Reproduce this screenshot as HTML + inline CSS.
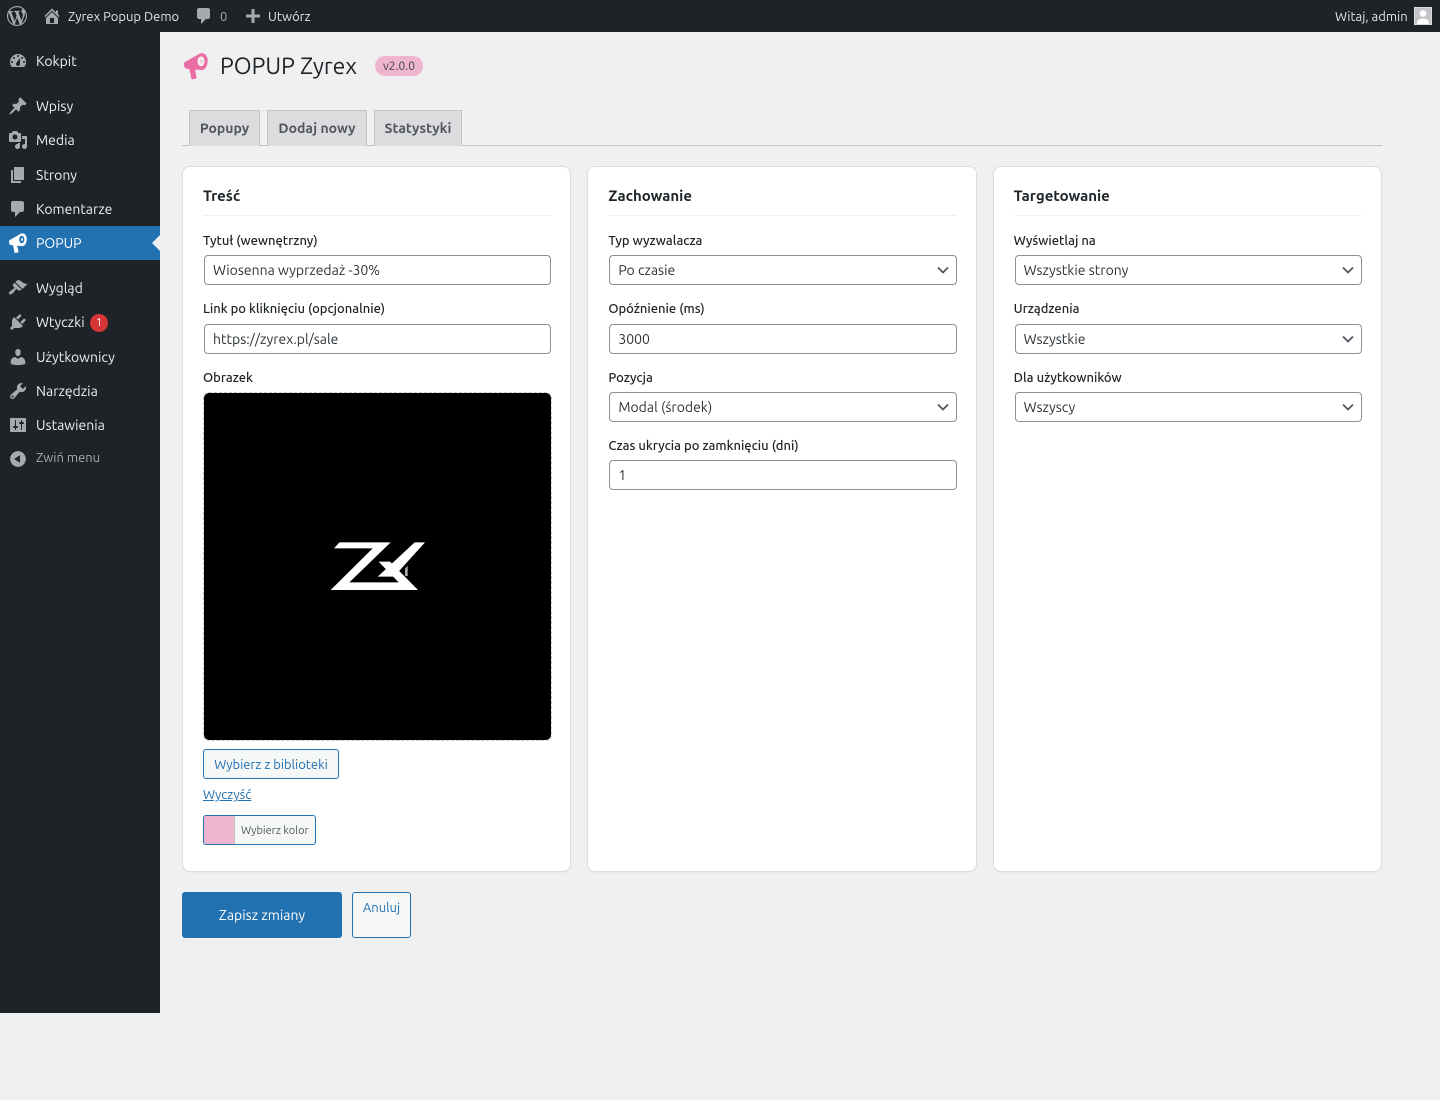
<!DOCTYPE html>
<html lang="pl"><head><meta charset="utf-8"><title>POPUP Zyrex</title>
<style>
*{box-sizing:border-box}
html{background:#f0f0f1}
html,body{margin:0;padding:0}
body{width:1440px;height:1100px;background:#f0f0f1;position:relative;overflow:hidden;font-family:Ubuntu,"Liberation Sans",sans-serif;font-size:13px;color:#3c434a}
.a{position:absolute;white-space:nowrap}
svg{position:absolute;display:block}
#bar{left:0;top:0;width:1440px;height:32px;background:#1d2327}
#menu{left:0;top:32px;width:160px;height:981px;background:#1d2327}
.bt{position:absolute;font-size:13px;line-height:32px;top:1px;color:#e2e3e4;white-space:nowrap}
.mi{position:absolute;left:36px;font-size:14px;line-height:20px;color:#f0f0f1;white-space:nowrap}
.ic{fill:#a7aaad}
.tab{position:absolute;top:110px;height:36px;background:#dcdcde;border:1px solid #c3c4c7;border-bottom:0;font-size:14px;font-weight:700;color:#50575e;line-height:35px;text-align:center;white-space:nowrap}
.card{position:absolute;top:166px;height:706px;background:#fff;border:1px solid #dcdcde;border-radius:8px;box-shadow:0 1px 2px rgba(0,0,0,.04)}
.h{position:absolute;font-size:15px;font-weight:700;color:#1d2327;line-height:20px;top:186px;white-space:nowrap}
.ln{position:absolute;top:215px;height:1px;background:#f0f0f1}
.l{position:absolute;font-size:13px;font-weight:500;line-height:18px;color:#1d2327;white-space:nowrap}
.f{position:absolute;height:30px;background:#fff;border:1px solid #8c8f94;border-radius:4px;font-size:14px;line-height:28px;padding-left:8px;color:#2c3338;white-space:nowrap}
.f svg{right:7px;top:8px}
</style></head><body>
<div class="a" id="bar"></div>
<div class="a" id="menu"></div>

<svg style="left:7px;top:6px" width="20" height="20" viewBox="0 0 20 20" class="ic"><path d="M20 10c0-5.51-4.49-10-10-10C4.48 0 0 4.49 0 10c0 5.52 4.48 10 10 10 5.51 0 10-4.48 10-10zM7.78 15.37L4.37 6.22c.55-.02 1.17-.08 1.17-.08.5-.06.44-1.13-.06-1.11 0 0-1.45.11-2.37.11-.18 0-.37 0-.58-.01C4.12 2.69 6.87 1.11 10 1.11c2.33 0 4.45.87 6.05 2.34-.68-.11-1.65.39-1.65 1.58 0 .74.45 1.36.9 2.1.35.61.55 1.36.55 2.46 0 1.49-1.4 5-1.4 5l-3.03-8.37c.54-.02.82-.17.82-.17.5-.05.44-1.25-.06-1.22 0 0-1.44.12-2.38.12-.87 0-2.33-.12-2.33-.12-.5-.03-.56 1.2-.06 1.22l.92.08 1.26 3.41zM17.41 10c.24-.64.74-1.87.43-4.25.7 1.29 1.05 2.71 1.05 4.25 0 3.29-1.73 6.24-4.4 7.78.97-2.59 1.94-5.2 2.92-7.78zM6.1 18.09C3.12 16.65 1.11 13.53 1.11 10c0-1.3.23-2.48.72-3.59C3.25 10.3 4.67 14.2 6.1 18.09zm4.03-6.63l2.58 6.98c-.86.29-1.76.45-2.71.45-.79 0-1.57-.11-2.29-.33.81-2.38 1.62-4.74 2.42-7.1z"/></svg>
<svg style="left:42px;top:6px" width="20" height="20" viewBox="0 0 20 20" class="ic"><path d="M16 8.500l1.530 1.530-1.060 1.060L10 4.620l-6.470 6.470-1.060-1.060L10 2.500l4 4v-2h2v4zm-6-2.460l6 5.990V18H4v-5.970zM12 17v-5H8v5h4z"/></svg>
<div class="bt" style="left:68px">Zyrex Popup Demo</div>
<svg style="left:194px;top:6px" width="20" height="20" viewBox="0 0 20 20" class="ic"><path d="M5 2h9c1.100 0 2 .9 2 2v7c0 1.100-.9 2-2 2h-2l-5 5v-5H5c-1.100 0-2-.9-2-2V4c0-1.100.9-2 2-2z"/></svg>
<div class="bt" style="left:220px;color:#a7aaad">0</div>
<svg style="left:243px;top:6px" width="20" height="20" viewBox="0 0 20 20" class="ic"><path d="M17 8.500v3h-5.500V17h-3v-5.500H3v-3h5.500V3h3v5.500z"/></svg>
<div class="bt" style="left:268px">Utwórz</div>
<div class="bt" style="left:1335px">Witaj, admin</div>
<div class="a" style="left:1414px;top:7px;width:18px;height:18px;background:#c3c4c7;border:1px solid #dcdcde;overflow:hidden"><svg style="left:0;top:0" width="16" height="16" viewBox="0 0 16 16" fill="#fff"><circle cx="8" cy="5.500" r="3.300"/><path d="M2 16c0-4 2.500-5.500 6-5.500S14 12 14 16z"/></svg></div>

<svg style="left:8px;top:51px" width="20" height="20" viewBox="0 0 20 20" class="ic"><path fill-rule="evenodd" d="M3.760 16h12.480c1.100-1.370 1.760-3.110 1.760-5 0-4.420-3.580-8-8-8s-8 3.580-8 8c0 1.890.66 3.630 1.760 5zM10 4c.55 0 1 .45 1 1s-.45 1-1 1-1-.45-1-1 .45-1 1-1zM6 6c.55 0 1 .45 1 1s-.45 1-1 1-1-.45-1-1 .45-1 1-1zm8 0c.55 0 1 .45 1 1s-.45 1-1 1-1-.45-1-1 .45-1 1-1zm-5.370 5.550L12 7v6c0 1.100-.9 2-2 2s-2-.9-2-2c0-.57.24-1.080.63-1.450zM4 10c.55 0 1 .45 1 1s-.45 1-1 1-1-.45-1-1 .45-1 1-1zm12 0c.55 0 1 .45 1 1s-.45 1-1 1-1-.45-1-1 .45-1 1-1z"/></svg>
<div class="mi" style="top:51px">Kokpit</div>
<svg style="left:8px;top:96px" width="20" height="20" viewBox="0 0 20 20" class="ic"><path d="M10.440 3.020l1.820-1.820 6.360 6.350-1.830 1.820c-1.050-.68-2.480-.57-3.410.36l-.75.75c-.92.93-1.040 2.350-.35 3.410l-1.830 1.820-2.410-2.410-2.800 2.790c-.42.42-3.380 2.710-3.800 2.290s1.860-3.390 2.280-3.810l2.790-2.790L4.100 9.360l1.830-1.820c1.050.69 2.480.57 3.400-.36l.75-.75c.93-.92 1.050-2.350.36-3.410z"/></svg>
<div class="mi" style="top:96px">Wpisy</div>
<svg style="left:8px;top:130px" width="20" height="20" viewBox="0 0 20 20" class="ic"><path fill-rule="evenodd" d="M13 11V4c0-.55-.45-1-1-1h-1.670L9 1H5L3.670 3H2c-.55 0-1 .45-1 1v7c0 .55.45 1 1 1h10c.55 0 1-.45 1-1zM7 4.500c1.380 0 2.500 1.120 2.500 2.500S8.380 9.500 7 9.500 4.500 8.380 4.500 7 5.620 4.500 7 4.500zM14 6h5v10.500c0 1.380-1.120 2.500-2.500 2.500S14 17.880 14 16.500s1.120-2.500 2.500-2.500c.17 0 .34.02.5.05V9h-3V6zm-4 8.050V13h2v3.500c0 1.380-1.120 2.500-2.500 2.500S7 17.880 7 16.500 8.120 14 9.500 14c.17 0 .34.02.5.05z"/></svg>
<div class="mi" style="top:130px">Media</div>
<svg style="left:8px;top:165px" width="20" height="20" viewBox="0 0 20 20" class="ic"><path d="M6 15V2h10v13H6zm-1 1h8v2H3V5h2v11z"/></svg>
<div class="mi" style="top:165px">Strony</div>
<svg style="left:8px;top:199px" width="20" height="20" viewBox="0 0 20 20" class="ic"><path d="M5 2h9c1.100 0 2 .9 2 2v7c0 1.100-.9 2-2 2h-2l-5 5v-5H5c-1.100 0-2-.9-2-2V4c0-1.100.9-2 2-2z"/></svg>
<div class="mi" style="top:199px">Komentarze</div>

<div class="a" style="left:0;top:226px;width:160px;height:34px;background:#2271b1"></div>
<div class="a" style="left:152px;top:235px;width:0;height:0;border:8px solid transparent;border-left:0;border-right-color:#f0f0f1"></div>
<svg style="left:6px;top:228px" width="30" height="30" viewBox="0 0 120 120"><path fill="#fff" d="M12 56C11 52 13 49 17 47L52 27C58 22 64 21 69 22 78 24 84 34 83 47 82 60 76 71 67 72 63 73 58 72 54 71L45 71 50 95C50 97 49 98 47 98L37 100C35 100 34 99 34 97L28 69 20 68C16 68 14 66 13 62z"/><ellipse cx="63" cy="46" rx="10.500" ry="15" fill="#2271b1"/><ellipse cx="64" cy="46" rx="4" ry="6" fill="#e8f0f7"/></svg>
<div class="mi" style="top:233px;color:#fff">POPUP</div>

<svg style="left:8px;top:278px" width="20" height="20" viewBox="0 0 20 20" class="ic"><path d="M14.480 11.060L7.410 3.990l1.500-1.500c.5-.56 2.300-.47 3.510.32 1.210.8 1.430 1.280 2.910 2.100 1.180.64 2.450 1.260 4.450.85zm-.71.71L6.700 4.700 4.930 6.470c-.39.39-.39 1.020 0 1.410l1.060 1.060c.39.39.39 1.030 0 1.420-.6.6-1.430 1.110-2.210 1.690-.35.26-.7.53-1.010.84C1.430 13.230.43 15.380 1.200 16.150s2.920-.23 4.240-1.570c.31-.31.58-.66.85-1.020.57-.78 1.080-1.610 1.690-2.210.39-.39 1.020-.39 1.410 0l1.060 1.060c.39.39 1.020.39 1.410 0z"/></svg>
<div class="mi" style="top:278px">Wygląd</div>
<svg style="left:8px;top:312px" width="20" height="20" viewBox="0 0 20 20" class="ic"><path d="M13.110 4.360L9.870 7.600 8 5.730l3.240-3.240c.35-.34 1.050-.2 1.560.32.52.51.66 1.210.31 1.550zm-8 1.770l.91-1.120 9.010 9.010-1.190.84c-.71.71-2.630 1.160-3.820 1.160H6.140L4.900 17.260c-.59.59-1.540.59-2.120 0-.59-.58-.59-1.530 0-2.120l1.240-1.240v-3.880c0-1.130.4-3.190 1.090-3.890zm7.260 3.970l3.240-3.240c.34-.35 1.040-.21 1.550.31.52.51.66 1.210.31 1.550l-3.240 3.250z"/></svg>
<div class="mi" style="top:312px">Wtyczki</div>
<div class="a" style="left:90px;top:314px;width:18px;height:18px;border-radius:9px;background:#d63638;color:#fff;font-size:11px;line-height:18px;text-align:center">1</div>
<svg style="left:8px;top:347px" width="20" height="20" viewBox="0 0 20 20" class="ic"><path d="M10 9.250c-2.270 0-2.730-3.440-2.730-3.440C7 4.020 7.820 2 9.970 2c2.160 0 2.980 2.020 2.710 3.810 0 0-.41 3.440-2.680 3.440zm0 2.570L12.720 10c2.390 0 4.520 2.330 4.520 4.530v2.490s-3.650 1.130-7.240 1.130c-3.650 0-7.240-1.130-7.240-1.130v-2.490c0-2.250 1.940-4.480 4.470-4.480z"/></svg>
<div class="mi" style="top:347px">Użytkownicy</div>
<svg style="left:8px;top:381px" width="20" height="20" viewBox="0 0 20 20" class="ic"><path fill-rule="evenodd" d="M16.680 9.770c-1.340 1.340-3.300 1.670-4.950.99l-5.410 6.520c-.99.99-2.590.99-3.580 0s-.99-2.590 0-3.570l6.520-5.420c-.68-1.650-.35-3.610.99-4.950 1.280-1.280 3.120-1.620 4.720-1.060l-2.890 2.890 2.820 2.820 2.860-2.870c.53 1.580.18 3.390-1.080 4.650zM3.810 16.210c.4.39 1.040.39 1.430 0 .4-.4.4-1.040 0-1.430-.39-.4-1.030-.4-1.430 0-.39.39-.39 1.030 0 1.430z"/></svg>
<div class="mi" style="top:381px">Narzędzia</div>
<svg style="left:8px;top:415px" width="20" height="20" viewBox="0 0 20 20" class="ic"><path fill-rule="evenodd" d="M18 16V4c0-.55-.45-1-1-1H3c-.55 0-1 .45-1 1v12c0 .55.45 1 1 1h14c.55 0 1-.45 1-1zM8 11h1c.55 0 1 .45 1 1s-.45 1-1 1H8v1.500c0 .28-.22.5-.5.5s-.5-.22-.5-.5V13H6c-.55 0-1-.45-1-1s.45-1 1-1h1V5.500c0-.28.22-.5.5-.5s.5.22.5.5V11zm5-2h-1c-.55 0-1-.45-1-1s.45-1 1-1h1V5.500c0-.28.22-.5.5-.5s.5.22.5.5V7h1c.55 0 1 .45 1 1s-.45 1-1 1h-1v5.500c0 .28-.22.5-.5.5s-.5-.22-.5-.5V9z"/></svg>
<div class="mi" style="top:415px">Ustawienia</div>
<svg style="left:8px;top:449px" width="20" height="20" viewBox="0 0 20 20" class="ic"><path fill-rule="evenodd" d="M10 2.160c4.330 0 7.840 3.510 7.840 7.840s-3.510 7.840-7.840 7.840S2.160 14.330 2.160 10 5.710 2.160 10 2.160zm2 11.720V6.120L6.180 9.970z"/></svg>
<div class="mi" style="top:448px;font-size:13px;color:#a7aaad">Zwiń menu</div>

<svg style="left:180px;top:46px" width="40" height="40" viewBox="0 0 120 120"><path fill="#ec6da6" d="M12 56C11 52 13 49 17 47L52 27C58 22 64 21 69 22 78 24 84 34 83 47 82 60 76 71 67 72 63 73 58 72 54 71L45 71 50 95C50 97 49 98 47 98L37 100C35 100 34 99 34 97L28 69 20 68C16 68 14 66 13 62z"/><ellipse cx="63" cy="46" rx="10.500" ry="15" fill="#f7f0f3"/><ellipse cx="64" cy="46" rx="4" ry="6" fill="#eccbd9"/></svg>
<div class="a" style="left:220px;top:51px;font-size:23px;line-height:32px;color:#1d2327">POPUP Zyrex</div>
<div class="a" style="left:375px;top:56px;width:48px;height:20px;border-radius:10px;background:#efb5ce;color:#3c434a;font-size:12px;line-height:22px;text-align:center">v2.0.0</div>

<div class="a" style="left:182px;top:145px;width:1200px;height:1px;background:#c3c4c7"></div>
<div class="tab" style="left:189px;width:71px">Popupy</div>
<div class="tab" style="left:267px;width:100px">Dodaj nowy</div>
<div class="tab" style="left:374px;width:88px">Statystyki</div>

<div class="card" style="left:182px;width:389.33px"></div>
<div class="card" style="left:587.33px;width:389.33px"></div>
<div class="card" style="left:992.67px;width:389.33px"></div>

<div class="h" style="left:203px">Treść</div><div class="ln" style="left:203px;width:347.33px"></div>
<div class="l" style="left:203px;top:232px">Tytuł (wewnętrzny)</div>
<div class="f" style="left:204px;top:255px;width:347.33px">Wiosenna wyprzedaż -30%</div>
<div class="l" style="left:203px;top:300px">Link po kliknięciu (opcjonalnie)</div>
<div class="f" style="left:204px;top:324px;width:347.33px">https://zyrex.pl/sale</div>
<div class="l" style="left:203px;top:369px">Obrazek</div>
<div class="a" style="left:203px;top:392px;width:349px;height:349px;background:#000;background-clip:padding-box;border:1px dashed #c3c4c7;border-radius:6px"></div>
<svg style="left:310px;top:520px" width="130" height="90" viewBox="0 0 390 270" fill="#fff"><path d="M72 85 88 67H242L118 187H270L292 210H62L188 85z"/><path d="M206 125H240L324 210H288z"/><path d="M314 67H345L252 170H203z"/><path d="M293 137V168H285V146z" fill="#aaa"/></svg>
<div class="a" style="left:203px;top:749px;width:136px;height:30px;background:#f6f7f7;border:1px solid #2271b1;border-radius:3px;color:#2271b1;font-size:13px;line-height:30px;text-align:center">Wybierz z biblioteki</div>
<div class="a" style="left:203px;top:786px;color:#2271b1;font-size:13px;line-height:18px;text-decoration:underline">Wyczyść</div>
<div class="a" style="left:203px;top:815px;width:113px;height:30px;background:#f6f7f7;border:1px solid #2271b1;border-radius:3px;color:#50575e;font-size:11px;line-height:30px;padding-left:37px;overflow:hidden">Wybierz kolor<div style="position:absolute;left:0;top:0;width:31px;height:28px;background:#efb5ce;border-right:1px solid #c3c4c7"></div></div>

<div class="h" style="left:608.33px">Zachowanie</div><div class="ln" style="left:608.33px;width:347.33px"></div>
<div class="l" style="left:608.33px;top:232px">Typ wyzwalacza</div>
<div class="f" style="left:609.33px;top:255px;width:347.33px">Po czasie<svg width="12" height="12" viewBox="0 0 12 12" fill="none" stroke="#50575e" stroke-width="1.800"><path d="M1 3.500l5 5 5-5"/></svg></div>
<div class="l" style="left:608.33px;top:300px">Opóźnienie (ms)</div>
<div class="f" style="left:609.33px;top:324px;width:347.33px">3000</div>
<div class="l" style="left:608.33px;top:369px">Pozycja</div>
<div class="f" style="left:609.33px;top:392px;width:347.33px">Modal (środek)<svg width="12" height="12" viewBox="0 0 12 12" fill="none" stroke="#50575e" stroke-width="1.800"><path d="M1 3.500l5 5 5-5"/></svg></div>
<div class="l" style="left:608.33px;top:437px">Czas ukrycia po zamknięciu (dni)</div>
<div class="f" style="left:609.33px;top:460px;width:347.33px">1</div>

<div class="h" style="left:1013.67px">Targetowanie</div><div class="ln" style="left:1013.67px;width:347.33px"></div>
<div class="l" style="left:1013.67px;top:232px">Wyświetlaj na</div>
<div class="f" style="left:1014.67px;top:255px;width:347.33px">Wszystkie strony<svg width="12" height="12" viewBox="0 0 12 12" fill="none" stroke="#50575e" stroke-width="1.800"><path d="M1 3.500l5 5 5-5"/></svg></div>
<div class="l" style="left:1013.67px;top:300px">Urządzenia</div>
<div class="f" style="left:1014.67px;top:324px;width:347.33px">Wszystkie<svg width="12" height="12" viewBox="0 0 12 12" fill="none" stroke="#50575e" stroke-width="1.800"><path d="M1 3.500l5 5 5-5"/></svg></div>
<div class="l" style="left:1013.67px;top:369px">Dla użytkowników</div>
<div class="f" style="left:1014.67px;top:392px;width:347.33px">Wszyscy<svg width="12" height="12" viewBox="0 0 12 12" fill="none" stroke="#50575e" stroke-width="1.800"><path d="M1 3.500l5 5 5-5"/></svg></div>

<div class="a" style="left:182px;top:892px;width:160px;height:46px;background:#2271b1;border-radius:3px;color:#fff;font-size:14px;line-height:46px;text-align:center">Zapisz zmiany</div>
<div class="a" style="left:352px;top:892px;width:59px;height:46px;background:#f6f7f7;border:1px solid #2271b1;border-radius:3px;color:#2271b1;font-size:13px;line-height:30px;text-align:center">Anuluj</div>
</body></html>
